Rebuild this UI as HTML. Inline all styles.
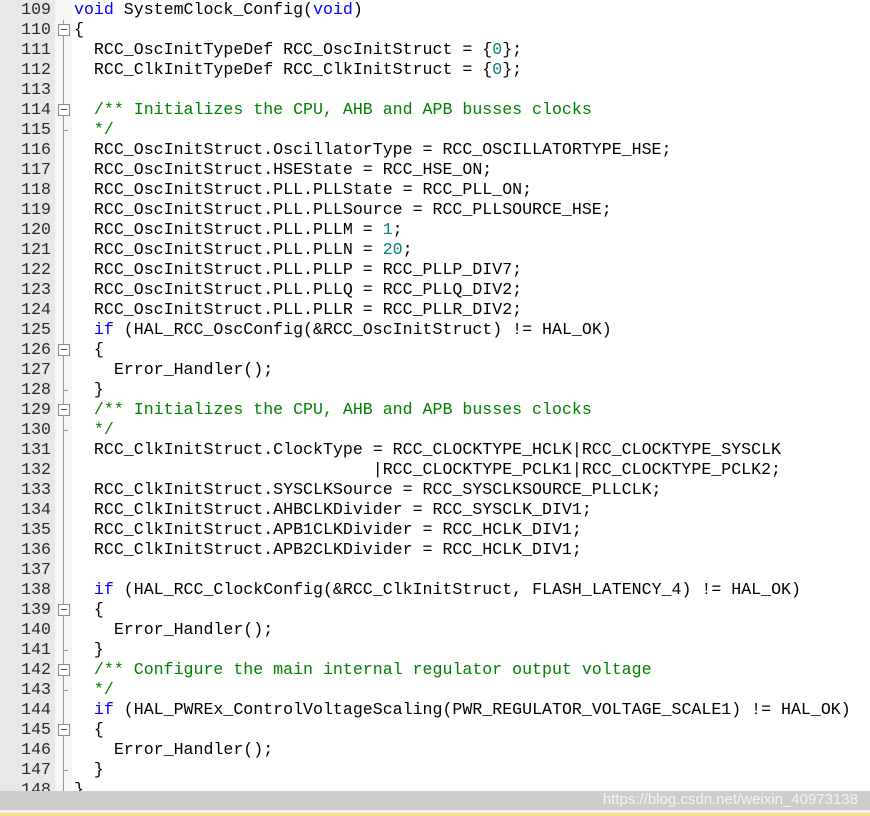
<!DOCTYPE html>
<html><head><meta charset="utf-8"><style>
html,body{margin:0;padding:0;width:870px;height:816px;overflow:hidden;background:#fff;}
#wrap{position:relative;width:870px;height:816px;overflow:hidden;}
#gut{position:absolute;left:0;top:0;width:55px;height:791px;background:#e8e8e8;}
#fold{position:absolute;left:55px;top:0;width:17px;height:791px;background:#f6f6f6;}
#vline{position:absolute;left:63px;top:20px;width:1px;height:771px;background:#9a9a9a;}
.ln{position:absolute;left:0;width:51px;text-align:right;height:20px;line-height:22px;font:16.6px "Liberation Mono",monospace;color:#2e2a22;}
.cd{position:absolute;left:74px;height:20px;line-height:22px;font:16.6px "Liberation Mono",monospace;color:#000;white-space:pre;}
.box{position:absolute;left:58px;width:10px;height:10px;border:1px solid #8a8a8a;background:#fff;}
.box:after{content:"";position:absolute;left:2px;top:4px;width:6px;height:1px;background:#555;}
.tick{position:absolute;left:63px;width:5px;height:1px;background:#9a9a9a;}
.k{color:#0000ff}.c{color:#008000}.n{color:#008080}
#bar{position:absolute;left:0;top:791px;width:870px;height:19px;background:#cdcdcd;}
#bar2{position:absolute;left:0;top:810px;width:870px;height:4px;background:#f2f2f2;}
#yel{position:absolute;left:0;top:813px;width:870px;height:3px;background:#fbdf8a;}
#wm{position:absolute;right:12px;top:790px;font:15px "Liberation Sans",sans-serif;color:#f4f4f4;line-height:20px;}
</style></head><body><div id="wrap">
<div id="gut"></div><div id="fold"></div><div id="vline"></div>
<div class="ln" style="top:0">109</div><div class="cd" style="top:0"><span class="k">void</span> SystemClock_Config(<span class="k">void</span>)</div>
<div class="ln" style="top:20px">110</div><div class="cd" style="top:20px">{</div>
<div class="ln" style="top:40px">111</div><div class="cd" style="top:40px">  RCC_OscInitTypeDef RCC_OscInitStruct = {<span class="n">0</span>};</div>
<div class="ln" style="top:60px">112</div><div class="cd" style="top:60px">  RCC_ClkInitTypeDef RCC_ClkInitStruct = {<span class="n">0</span>};</div>
<div class="ln" style="top:80px">113</div>
<div class="ln" style="top:100px">114</div><div class="cd c" style="top:100px">  /** Initializes the CPU, AHB and APB busses clocks</div>
<div class="ln" style="top:120px">115</div><div class="cd c" style="top:120px">  */</div>
<div class="ln" style="top:140px">116</div><div class="cd" style="top:140px">  RCC_OscInitStruct.OscillatorType = RCC_OSCILLATORTYPE_HSE;</div>
<div class="ln" style="top:160px">117</div><div class="cd" style="top:160px">  RCC_OscInitStruct.HSEState = RCC_HSE_ON;</div>
<div class="ln" style="top:180px">118</div><div class="cd" style="top:180px">  RCC_OscInitStruct.PLL.PLLState = RCC_PLL_ON;</div>
<div class="ln" style="top:200px">119</div><div class="cd" style="top:200px">  RCC_OscInitStruct.PLL.PLLSource = RCC_PLLSOURCE_HSE;</div>
<div class="ln" style="top:220px">120</div><div class="cd" style="top:220px">  RCC_OscInitStruct.PLL.PLLM = <span class="n">1</span>;</div>
<div class="ln" style="top:240px">121</div><div class="cd" style="top:240px">  RCC_OscInitStruct.PLL.PLLN = <span class="n">20</span>;</div>
<div class="ln" style="top:260px">122</div><div class="cd" style="top:260px">  RCC_OscInitStruct.PLL.PLLP = RCC_PLLP_DIV7;</div>
<div class="ln" style="top:280px">123</div><div class="cd" style="top:280px">  RCC_OscInitStruct.PLL.PLLQ = RCC_PLLQ_DIV2;</div>
<div class="ln" style="top:300px">124</div><div class="cd" style="top:300px">  RCC_OscInitStruct.PLL.PLLR = RCC_PLLR_DIV2;</div>
<div class="ln" style="top:320px">125</div><div class="cd" style="top:320px">  <span class="k">if</span> (HAL_RCC_OscConfig(&amp;RCC_OscInitStruct) != HAL_OK)</div>
<div class="ln" style="top:340px">126</div><div class="cd" style="top:340px">  {</div>
<div class="ln" style="top:360px">127</div><div class="cd" style="top:360px">    Error_Handler();</div>
<div class="ln" style="top:380px">128</div><div class="cd" style="top:380px">  }</div>
<div class="ln" style="top:400px">129</div><div class="cd c" style="top:400px">  /** Initializes the CPU, AHB and APB busses clocks</div>
<div class="ln" style="top:420px">130</div><div class="cd c" style="top:420px">  */</div>
<div class="ln" style="top:440px">131</div><div class="cd" style="top:440px">  RCC_ClkInitStruct.ClockType = RCC_CLOCKTYPE_HCLK|RCC_CLOCKTYPE_SYSCLK</div>
<div class="ln" style="top:460px">132</div><div class="cd" style="top:460px">                              |RCC_CLOCKTYPE_PCLK1|RCC_CLOCKTYPE_PCLK2;</div>
<div class="ln" style="top:480px">133</div><div class="cd" style="top:480px">  RCC_ClkInitStruct.SYSCLKSource = RCC_SYSCLKSOURCE_PLLCLK;</div>
<div class="ln" style="top:500px">134</div><div class="cd" style="top:500px">  RCC_ClkInitStruct.AHBCLKDivider = RCC_SYSCLK_DIV1;</div>
<div class="ln" style="top:520px">135</div><div class="cd" style="top:520px">  RCC_ClkInitStruct.APB1CLKDivider = RCC_HCLK_DIV1;</div>
<div class="ln" style="top:540px">136</div><div class="cd" style="top:540px">  RCC_ClkInitStruct.APB2CLKDivider = RCC_HCLK_DIV1;</div>
<div class="ln" style="top:560px">137</div>
<div class="ln" style="top:580px">138</div><div class="cd" style="top:580px">  <span class="k">if</span> (HAL_RCC_ClockConfig(&amp;RCC_ClkInitStruct, FLASH_LATENCY_4) != HAL_OK)</div>
<div class="ln" style="top:600px">139</div><div class="cd" style="top:600px">  {</div>
<div class="ln" style="top:620px">140</div><div class="cd" style="top:620px">    Error_Handler();</div>
<div class="ln" style="top:640px">141</div><div class="cd" style="top:640px">  }</div>
<div class="ln" style="top:660px">142</div><div class="cd c" style="top:660px">  /** Configure the main internal regulator output voltage</div>
<div class="ln" style="top:680px">143</div><div class="cd c" style="top:680px">  */</div>
<div class="ln" style="top:700px">144</div><div class="cd" style="top:700px">  <span class="k">if</span> (HAL_PWREx_ControlVoltageScaling(PWR_REGULATOR_VOLTAGE_SCALE1) != HAL_OK)</div>
<div class="ln" style="top:720px">145</div><div class="cd" style="top:720px">  {</div>
<div class="ln" style="top:740px">146</div><div class="cd" style="top:740px">    Error_Handler();</div>
<div class="ln" style="top:760px">147</div><div class="cd" style="top:760px">  }</div>
<div class="ln" style="top:780px">148</div><div class="cd" style="top:780px">}</div>
<div class="box" style="top:24px"></div>
<div class="box" style="top:104px"></div>
<div class="box" style="top:344px"></div>
<div class="box" style="top:404px"></div>
<div class="box" style="top:604px"></div>
<div class="box" style="top:664px"></div>
<div class="box" style="top:724px"></div>
<div class="tick" style="top:130px"></div>
<div class="tick" style="top:390px"></div>
<div class="tick" style="top:430px"></div>
<div class="tick" style="top:650px"></div>
<div class="tick" style="top:690px"></div>
<div class="tick" style="top:770px"></div>
<div id="bar"></div><div id="bar2"></div><div id="yel"></div>
<div id="wm">https://blog.csdn.net/weixin_40973138</div>
</div></body></html>
